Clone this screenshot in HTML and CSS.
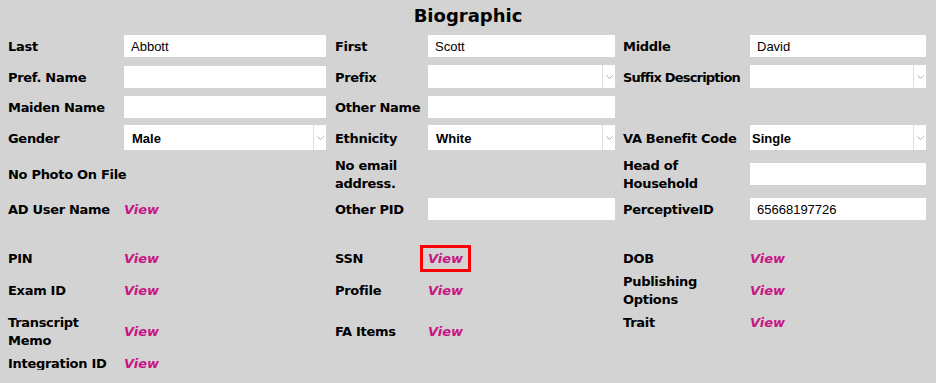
FILE: index.html
```html
<!DOCTYPE html>
<html lang="en">
<head>
  <meta charset="UTF-8" />
  <title>Biographic</title>
  <link rel="stylesheet" href="styles.css">
</head>
<body>

  <h1 class="title">Biographic</h1>

  <div class="grid top">
    <div class="lbl">Last</div>
    <div class="field">Abbott</div>
    <div class="lbl mid">First</div>
    <div class="field">Scott</div>
    <div class="lbl end">Middle</div>
    <div class="field">David</div>

    <div class="lbl">Pref. Name</div>
    <div class="field"></div>
    <div class="lbl mid">Prefix</div>
    <div class="select"><span class="val"></span><span class="arrow"><svg width="7" height="4" viewBox="0 0 7 4"><path d="M0.5 0.5 L3.5 3.5 L6.5 0.5" /></svg></span></div>
    <div class="lbl end narrow">Suffix Description</div>
    <div class="select"><span class="val"></span><span class="arrow"><svg width="7" height="4" viewBox="0 0 7 4"><path d="M0.5 0.5 L3.5 3.5 L6.5 0.5" /></svg></span></div>

    <div class="lbl">Maiden Name</div>
    <div class="field"></div>
    <div class="lbl mid">Other Name</div>
    <div class="field"></div>
    <div></div>
    <div></div>

    <div class="lbl">Gender</div>
    <div class="select tall"><span class="val">Male</span><span class="arrow"><svg width="7" height="4" viewBox="0 0 7 4"><path d="M0.5 0.5 L3.5 3.5 L6.5 0.5" /></svg></span></div>
    <div class="lbl mid">Ethnicity</div>
    <div class="select tall"><span class="val">White</span><span class="arrow"><svg width="7" height="4" viewBox="0 0 7 4"><path d="M0.5 0.5 L3.5 3.5 L6.5 0.5" /></svg></span></div>
    <div class="lbl end">VA Benefit Code</div>
    <div class="select tall tight"><span class="val">Single</span><span class="arrow"><svg width="7" height="4" viewBox="0 0 7 4"><path d="M0.5 0.5 L3.5 3.5 L6.5 0.5" /></svg></span></div>

    <div class="lbl span2">No Photo On File</div>
    <div class="lbl mid">No email<br>address.</div>
    <div></div>
    <div class="lbl end">Head of<br>Household</div>
    <div class="field"></div>

    <div class="lbl">AD User Name</div>
    <a class="view" href="#">View</a>
    <div class="lbl mid">Other PID</div>
    <div class="field"></div>
    <div class="lbl end">PerceptiveID</div>
    <div class="field">65668197726</div>
  </div>

  <div class="grid bottom">
    <div class="lbl">PIN</div>
    <a class="view" href="#">View</a>
    <div class="lbl mid">SSN</div>
    <a class="view focus" href="#">View</a>
    <div class="lbl end">DOB</div>
    <a class="view" href="#">View</a>

    <div class="lbl">Exam ID</div>
    <a class="view" href="#">View</a>
    <div class="lbl mid">Profile</div>
    <a class="view" href="#">View</a>
    <div class="lbl end">Publishing<br>Options</div>
    <a class="view" href="#">View</a>

    <div class="lbl">Transcript<br>Memo</div>
    <a class="view" href="#">View</a>
    <div class="lbl mid">FA Items</div>
    <a class="view" href="#">View</a>
    <div class="lbl end hang">Trait</div>
    <a class="view hang" href="#">View</a>

    <div class="lbl">Integration ID</div>
    <a class="view" href="#">View</a>
  </div>

</body>
</html>
```

FILE: styles.css
```css
* {
  box-sizing: border-box;
}

body {
  margin: 0;
  background: #d3d3d3;
  color: #000;
  font-family: "DejaVu Sans", sans-serif;
}

.title {
  margin: 0;
  height: 31px;
  line-height: 31px;
  text-align: center;
  font-size: 18px;
  font-weight: bold;
}

.grid {
  display: grid;
  grid-template-columns: 116px 202px 102px 187px 135px 176px;
  padding-left: 8px;
  align-items: center;
}

.top { grid-template-rows: 30px 31px 30px 31px 42px 28px; }

.bottom {
  grid-template-rows: 32px 32px 50px 14px;
  margin-top: 19px;
}

.lbl {
  font-size: 13px;
  font-weight: bold;
  line-height: 18px;
  letter-spacing: -0.3px;
  white-space: nowrap;
  padding-top: 2px;
}

.lbl.mid { padding-left: 9px; }
.lbl.end { padding-left: 8px; }
.lbl.narrow { letter-spacing: -0.8px; }

.span2 { grid-column: span 2; }

.hang { height: 38px; }

.field {
  height: 22px;
  background: #fff;
  padding-left: 7px;
  display: flex;
  align-items: center;
  font: 13px "Liberation Sans", Arial, sans-serif;
}

.select {
  height: 23px;
  background: #fff;
  display: flex;
}

.select.tall { height: 25px; }

.select .val {
  flex: 1;
  display: flex;
  align-items: center;
  padding-left: 8px;
  padding-top: 2px;
  font: bold 13px "Liberation Sans", Arial, sans-serif;
}

.select.tight .val { padding-left: 2px; }

.select .arrow {
  width: 13px;
  border-left: 1px solid #dedede;
  display: flex;
  align-items: center;
  justify-content: center;
}

.arrow path {
  fill: none;
  stroke: #a8a8a8;
  stroke-width: 1;
}

.view {
  justify-self: start;
  color: #c71585;
  font-size: 13px;
  font-weight: bold;
  font-style: italic;
  line-height: 18px;
  text-decoration: none;
  padding-top: 2px;
}

.view.focus {
  border: 3px solid #f00;
  padding: 2px 5px 1px;
  margin-left: -8px;
}
```
